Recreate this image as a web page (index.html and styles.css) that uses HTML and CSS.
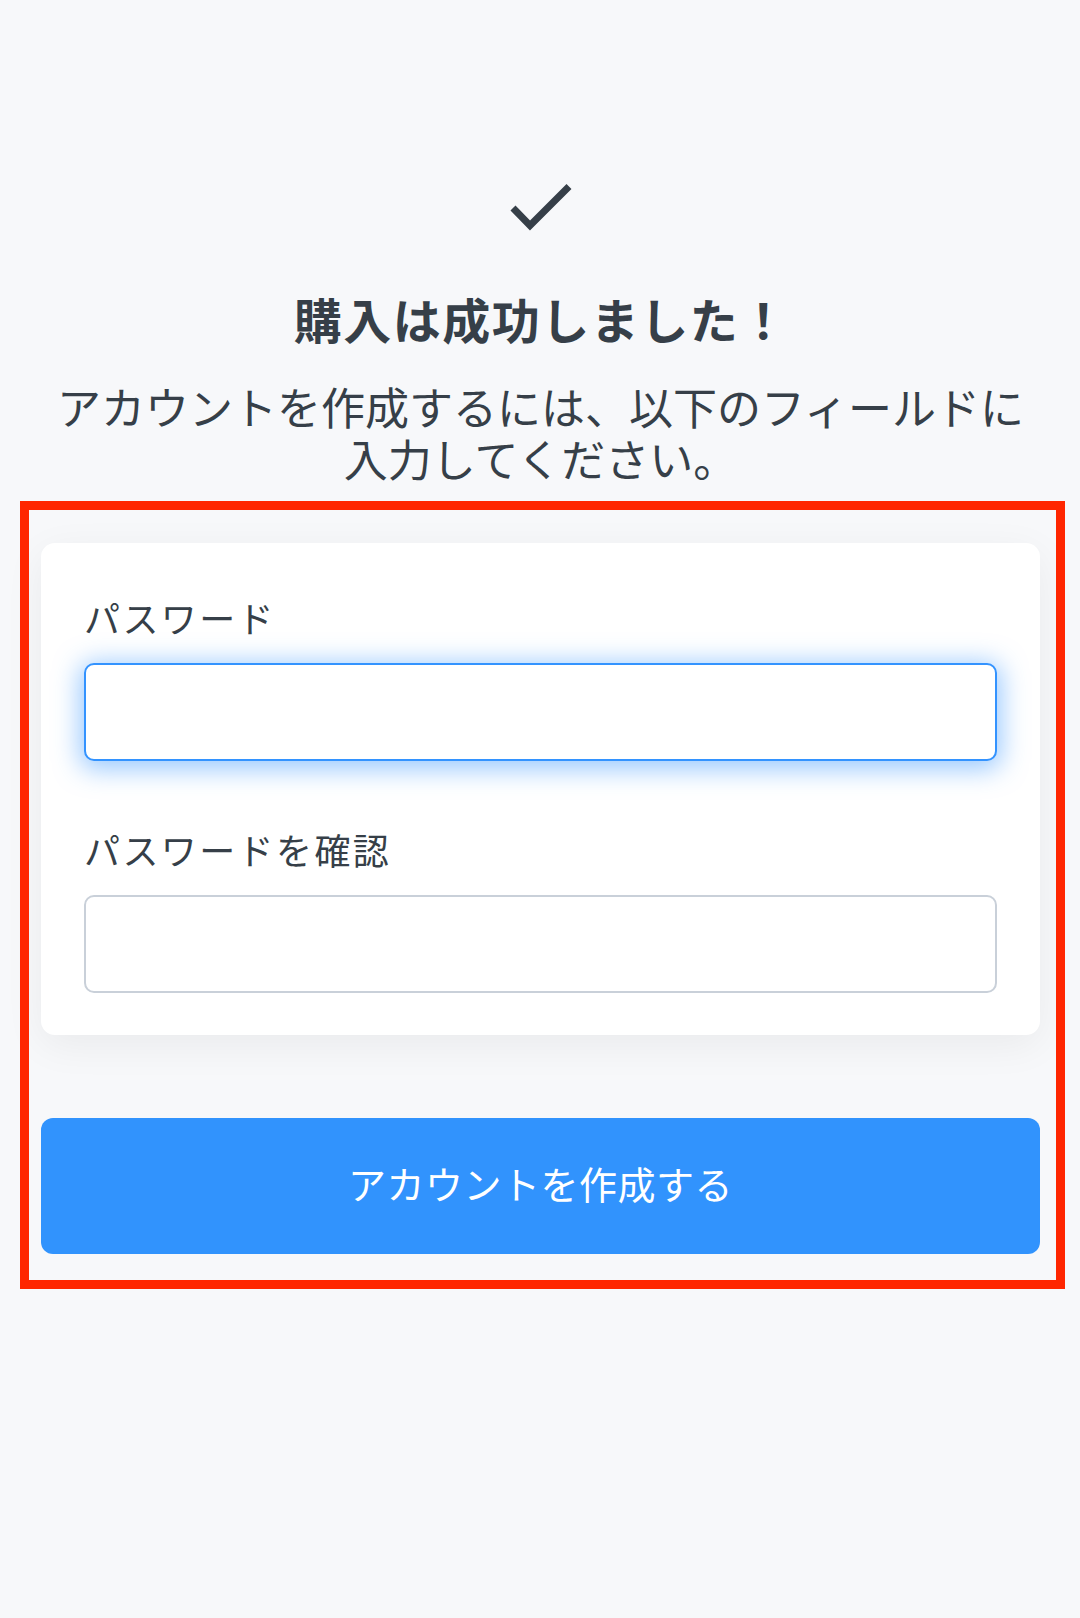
FILE: index.html
```html
<!DOCTYPE html>
<html lang="ja">
<head>
<meta charset="utf-8">
<title>購入は成功しました</title>
<link rel="stylesheet" href="styles.css">
</head>
<body>
<main class="page">
  <div class="check">
    <svg width="80" height="60" viewBox="0 0 80 60" aria-hidden="true">
      <polyline points="12,31 29,48.5 68,9.5" fill="none" stroke="#363f48" stroke-width="7" stroke-linecap="butt" stroke-linejoin="miter"/>
    </svg>
  </div>
  <h1 class="title">購入は成功しました！</h1>
  <p class="lead">アカウントを作成するには、以下のフィールドに入力してください。</p>
  <section class="form-area">
    <div class="highlight"></div>
    <div class="card">
      <label class="label" for="pw">パスワード</label>
      <div class="input input--focus" id="pw"></div>
      <label class="label label--second" for="pw2">パスワードを確認</label>
      <div class="input" id="pw2"></div>
    </div>
    <button class="btn" type="button">アカウントを作成する</button>
  </section>
</main>
</body>
</html>
```

FILE: styles.css
```css
* { box-sizing: border-box; }
html, body {
  margin: 0;
  padding: 0;
  background: #f7f8fa;
}
body {
  width: 1080px;
  height: 1618px;
  font-family: "Noto Sans CJK JP", "Noto Sans", sans-serif;
  color: #363f48;
}
.page {
  padding: 177px 40px 0 41px;
  display: flex;
  flex-direction: column;
}
.check {
  display: flex;
  justify-content: center;
  height: 60px;
}
.check svg { display: block; }
.title {
  margin: 53px 0 0;
  font-size: 48px;
  line-height: 57.6px;
  font-weight: 700;
  letter-spacing: 1.5px;
  text-indent: 1.5px;
  text-align: center;
}
.lead {
  margin: 32px 0 0;
  font-size: 44px;
  line-height: 52px;
  font-weight: 400;
  text-align: center;
}
.form-area {
  position: relative;
  margin-top: 59px;
  display: flex;
  flex-direction: column;
}
.highlight {
  position: absolute;
  left: -21px;
  top: -42px;
  right: -25px;
  bottom: -35px;
  border: 9px solid #ff2600;
  pointer-events: none;
  z-index: 2;
}
.card {
  background: #ffffff;
  border-radius: 14px;
  padding: 47px 43px 42px;
  display: flex;
  flex-direction: column;
  box-shadow: 0 10px 40px rgba(0, 0, 0, 0.06);
}
.label {
  font-size: 36px;
  line-height: 54px;
  letter-spacing: 2.4px;
  color: #363f48;
}
.label--second { margin-top: 61px; }
.input {
  margin-top: 19px;
  height: 98px;
  background: #fff;
  border: 2px solid #c9d0d9;
  border-radius: 10px;
}
.input--focus {
  border-color: #3393ff;
  box-shadow: 0 4px 26px 4px rgba(51, 147, 255, 0.5);
}
.btn {
  margin-top: 83px;
  height: 136px;
  border: 0;
  border-radius: 12px;
  background: #3193fd;
  color: #fff;
  font-family: "Noto Sans CJK JP", "Noto Sans", sans-serif;
  font-size: 38px;
  letter-spacing: 0.5px;
  font-weight: 400;
  padding: 0 0 7px;
}
```
